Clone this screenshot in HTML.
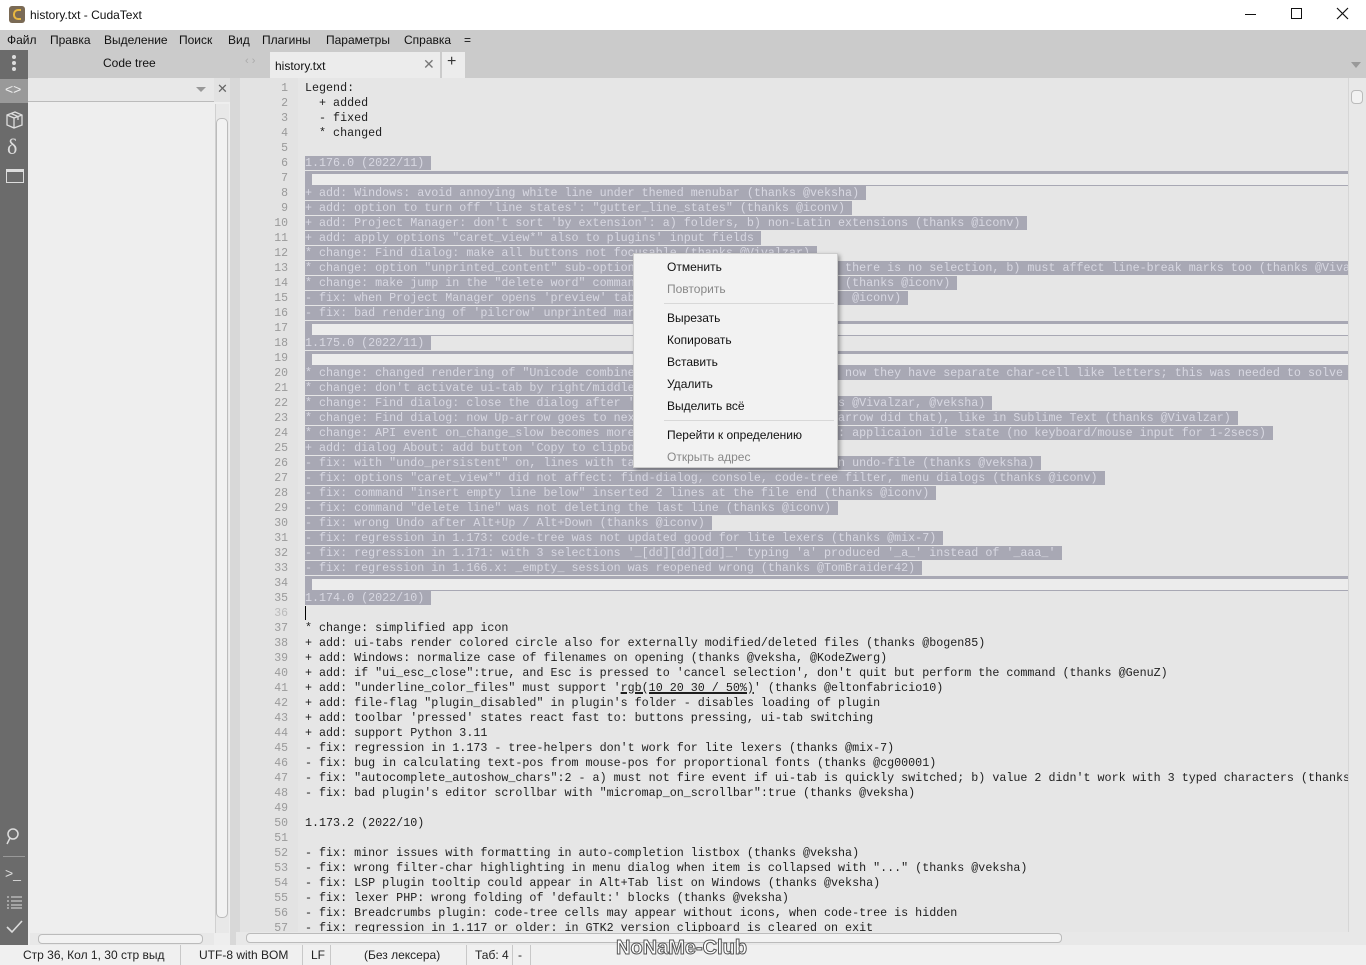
<!DOCTYPE html>
<html><head><meta charset="utf-8"><style>
*{margin:0;padding:0;box-sizing:border-box}
body{width:1366px;height:965px;position:relative;overflow:hidden;background:#e6e6e6;font-family:"Liberation Sans","Noto Sans CJK SC",sans-serif;font-size:12px;color:#111}
.a{position:absolute}
#title{left:0;top:0;width:1366px;height:30px;background:#fff}
#menu{left:0;top:30px;width:1366px;height:48px;background:#cbcbcb}
#menu span{position:absolute;top:3px;font-size:12px;color:#111}
#lt{left:0;top:50px;width:28px;height:895px;background:#6b6b6b}
#panel{left:28px;top:78px;width:202px;height:867px;background:#eeeeee}
#ed{left:240px;top:78px;width:1108px;height:854px;background:#e6e6e6;overflow:hidden}
#code{position:absolute;left:65px;top:3px;font-family:"Liberation Mono",monospace;font-size:11.7px;line-height:15px;white-space:pre;color:#1e1e1e}
#code div{height:15px}
.s{background:#a8a8b4;color:#d8d8e2}
#gut{position:absolute;left:0;top:3px;width:48px;text-align:right;font-family:"Liberation Mono",monospace;font-size:11.5px;line-height:15px;color:#9a9a9a}
.e{display:block;width:1043px;height:15px;background:#a8a8b4;position:relative}
.e i{position:absolute;left:7px;top:3px;right:0;height:11px;background:#ececec}
#ctx{left:633px;top:253px;width:205px;height:215px;background:#f2f2f2;border:1px solid #ccc;box-shadow:2px 2px 4px rgba(0,0,0,.35)}
#ctx div{position:absolute;left:33px;font-size:12px;color:#111}
#ctx .d{color:#888}
#ctx hr{position:absolute;left:30px;width:170px;border:0;border-top:1px solid #d8d8d8}
#status{left:0;top:945px;width:1366px;height:20px;background:#f0f0f0;font-size:12px}
#status span{position:absolute;top:3px;color:#222}
#status b{position:absolute;top:0;width:1px;height:20px;background:#c8c8c8}
</style></head><body>
<div id="title" class="a">
 <div class="a" style="left:9px;top:6px;width:16px;height:17px;background:#7a6a55;border-radius:3px"><div class="a" style="left:4px;top:3px;width:8px;height:11px;border:2px solid #e8b840;border-right:none;border-radius:5px 0 0 5px"></div></div>
 <span class="a" style="left:30px;top:8px;font-size:12px">history.txt - CudaText</span>
 <div class="a" style="left:1245px;top:14px;width:11px;height:1px;background:#111"></div>
 <div class="a" style="left:1291px;top:8px;width:11px;height:11px;border:1px solid #111"></div>
 <svg class="a" style="left:1336px;top:7px" width="13" height="13"><path d="M1 1L12 12M12 1L1 12" stroke="#111" stroke-width="1.2"/></svg>
</div>
<div id="menu" class="a">
 <span style="left:7px">Файл</span><span style="left:50px">Правка</span><span style="left:104px">Выделение</span><span style="left:179px">Поиск</span><span style="left:228px">Вид</span><span style="left:262px">Плагины</span><span style="left:326px">Параметры</span><span style="left:404px">Справка</span><span style="left:464px">=</span>
 <span style="left:103px;top:26px">Code tree</span>
 <span style="left:245px;top:25px;color:#aaa;font-size:11px">‹ ›</span>
 <div class="a" style="left:270px;top:22px;width:170px;height:26px;background:#ececec"></div>
 <span style="left:275px;top:29px">history.txt</span>
 <span style="left:423px;top:26px;color:#777;font-size:14px">✕</span>
 <div class="a" style="left:442px;top:22px;width:23px;height:26px;background:#ececec"></div>
 <span style="left:447px;top:23px;font-size:16px;color:#333">+</span>
 <div class="a" style="left:1351px;top:32px;border:5px solid transparent;border-top:6px solid #999"></div>
</div>
<div id="lt" class="a">
 <div class="a" style="left:12px;top:5px;width:4px;height:4px;border-radius:2px;background:#ddd;box-shadow:0 6px 0 #ddd,0 12px 0 #ddd"></div>
 <div class="a" style="left:0;top:29px;width:29px;height:24px;background:#999"></div>
 <span class="a" style="left:5px;top:31px;color:#eee;font-size:14px">&lt;&gt;</span>
 <svg class="a" style="left:5px;top:60px" width="19" height="19"><path d="M2 5L10 2L17 5L17 15L9 18L2 15ZM2 5L9 8L17 5M9 8L9 18M6 3.5L13 6.5L13 10" fill="none" stroke="#ddd" stroke-width="1.3"/></svg>
 <span class="a" style="left:7px;top:84px;color:#ddd;font-size:22px;font-family:'Liberation Serif',serif">δ</span>
 <div class="a" style="left:6px;top:119px;width:18px;height:14px;border:1.5px solid #ddd;border-top-width:3px"></div>
 <svg class="a" style="left:6px;top:778px" width="16" height="18"><circle cx="7" cy="6" r="5" fill="none" stroke="#ddd" stroke-width="1.5"/><path d="M4 10L1 16" stroke="#ddd" stroke-width="1.5"/></svg>
 <div class="a" style="left:3px;top:806px;width:22px;height:1px;background:#999"></div>
 <span class="a" style="left:5px;top:815px;color:#ddd;font-size:14px">&gt;_</span>
 <svg class="a" style="left:6px;top:845px" width="17" height="14"><path d="M1 2H3M5 2H16M1 6H3M5 6H16M1 10H3M5 10H16M1 13H3M5 13H16" stroke="#ddd"/></svg>
 <svg class="a" style="left:6px;top:870px" width="17" height="14"><path d="M1 7L6 12L16 1" fill="none" stroke="#ddd" stroke-width="1.6"/></svg>
</div>
<div id="panel" class="a">
 <div class="a" style="left:0;top:0;width:186px;height:24px;background:#e8e8e8;border-bottom:1px solid #bbb"></div>
 <div class="a" style="left:168px;top:9px;border:5px solid transparent;border-top:5px solid #999"></div>
 <div class="a" style="left:186px;top:0;width:16px;height:24px;background:#e2e2e2"></div>
 <span class="a" style="left:189px;top:3px;color:#666;font-size:13px">✕</span>
 <div class="a" style="left:187px;top:26px;width:14px;height:829px;background:#e8e8e8;border-left:1px solid #d0d0d0"></div>
 <div class="a" style="left:188px;top:40px;width:12px;height:800px;border:1px solid #bbb;border-radius:5px;background:#f2f2f2"></div>
 <div class="a" style="left:2px;top:855px;width:184px;height:12px;background:#e8e8e8"></div>
 <div class="a" style="left:10px;top:856px;width:165px;height:10px;border:1px solid #bbb;border-radius:4px;background:#f2f2f2"></div>
</div>
<div class="a" style="left:230px;top:78px;width:10px;height:867px;background:#d8d8d8"></div>
<div id="ed" class="a">
 <div class="a" style="left:0;top:0;width:58px;height:854px;background:#e3e3e3"></div>
 <div id="gut">1<br>2<br>3<br>4<br>5<br>6<br>7<br>8<br>9<br>10<br>11<br>12<br>13<br>14<br>15<br>16<br>17<br>18<br>19<br>20<br>21<br>22<br>23<br>24<br>25<br>26<br>27<br>28<br>29<br>30<br>31<br>32<br>33<br>34<br>35<br><span style="color:#bbb">36</span><br>37<br>38<br>39<br>40<br>41<br>42<br>43<br>44<br>45<br>46<br>47<br>48<br>49<br>50<br>51<br>52<br>53<br>54<br>55<br>56<br>57</div>
 <div id="code"><div>Legend:</div><div>  + added</div><div>  - fixed</div><div>  * changed</div><div></div><div><span class="s">1.176.0 (2022/11) </span></div><div><span class="e"><i></i></span></div><div><span class="s">+ add: Windows: avoid annoying white line under themed menubar (thanks @veksha) </span></div><div><span class="s">+ add: option to turn off 'line states': "gutter_line_states" (thanks @iconv) </span></div><div><span class="s">+ add: Project Manager: don't sort 'by extension': a) folders, b) non-Latin extensions (thanks @iconv) </span></div><div><span class="s">+ add: apply options "caret_view*" also to plugins' input fields </span></div><div><span class="s">* change: Find dialog: make all buttons not focusable (thanks @Vivalzar) </span></div><div><span class="s">* change: option "unprinted_content" sub-option                              there is no selection, b) must affect line-break marks too (thanks @Vivalzar) </span></div><div><span class="s">* change: make jump in the "delete word" comman                              (thanks @iconv) </span></div><div><span class="s">- fix: when Project Manager opens 'preview' tab                               @iconv) </span></div><div><span class="s">- fix: bad rendering of 'pilcrow' unprinted marks     </span></div><div><span class="e"><i></i></span></div><div><span class="s">1.175.0 (2022/11) </span></div><div><span class="e"><i></i></span></div><div><span class="s">* change: changed rendering of "Unicode combine                              now they have separate char-cell like letters; this was needed to solve some problems </span></div><div><span class="s">* change: don't activate ui-tab by right/middle click </span></div><div><span class="s">* change: Find dialog: close the dialog after '                             s @Vivalzar, @veksha) </span></div><div><span class="s">* change: Find dialog: now Up-arrow goes to nex                             arrow did that), like in Sublime Text (thanks @Vivalzar) </span></div><div><span class="s">* change: API event on_change_slow becomes more                             : applicaion idle state (no keyboard/mouse input for 1-2secs) </span></div><div><span class="s">+ add: dialog About: add button 'Copy to clipboard' </span></div><div><span class="s">- fix: with "undo_persistent" on, lines with ta                             n undo-file (thanks @veksha) </span></div><div><span class="s">- fix: options "caret_view*" did not affect: find-dialog, console, code-tree filter, menu dialogs (thanks @iconv) </span></div><div><span class="s">- fix: command "insert empty line below" inserted 2 lines at the file end (thanks @iconv) </span></div><div><span class="s">- fix: command "delete line" was not deleting the last line (thanks @iconv) </span></div><div><span class="s">- fix: wrong Undo after Alt+Up / Alt+Down (thanks @iconv) </span></div><div><span class="s">- fix: regression in 1.173: code-tree was not updated good for lite lexers (thanks @mix-7) </span></div><div><span class="s">- fix: regression in 1.171: with 3 selections '_[dd][dd][dd]_' typing 'a' produced '_a_' instead of '_aaa_' </span></div><div><span class="s">- fix: regression in 1.166.x: _empty_ session was reopened wrong (thanks @TomBraider42) </span></div><div><span class="e"><i></i></span></div><div><span class="s">1.174.0 (2022/10) </span></div><div><span style="border-left:1px solid #000"></span></div><div>* change: simplified app icon</div><div>+ add: ui-tabs render colored circle also for externally modified/deleted files (thanks @bogen85)</div><div>+ add: Windows: normalize case of filenames on opening (thanks @veksha, @KodeZwerg)</div><div>+ add: if "ui_esc_close":true, and Esc is pressed to 'cancel selection', don't quit but perform the command (thanks @GenuZ)</div><div>+ add: "underline_color_files" must support '<span style="text-decoration:underline;text-decoration-thickness:2px">rgb(10 20 30 / 50%)</span>' (thanks @eltonfabricio10)</div><div>+ add: file-flag "plugin_disabled" in plugin's folder - disables loading of plugin</div><div>+ add: toolbar 'pressed' states react fast to: buttons pressing, ui-tab switching</div><div>+ add: support Python 3.11</div><div>- fix: regression in 1.173 - tree-helpers don't work for lite lexers (thanks @mix-7)</div><div>- fix: bug in calculating text-pos from mouse-pos for proportional fonts (thanks @cg00001)</div><div>- fix: "autocomplete_autoshow_chars":2 - a) must not fire event if ui-tab is quickly switched; b) value 2 didn't work with 3 typed characters (thanks</div><div>- fix: bad plugin's editor scrollbar with "micromap_on_scrollbar":true (thanks @veksha)</div><div></div><div>1.173.2 (2022/10)</div><div></div><div>- fix: minor issues with formatting in auto-completion listbox (thanks @veksha)</div><div>- fix: wrong filter-char highlighting in menu dialog when item is collapsed with "..." (thanks @veksha)</div><div>- fix: LSP plugin tooltip could appear in Alt+Tab list on Windows (thanks @veksha)</div><div>- fix: lexer PHP: wrong folding of 'default:' blocks (thanks @veksha)</div><div>- fix: Breadcrumbs plugin: code-tree cells may appear without icons, when code-tree is hidden</div><div>- fix: regression in 1.117 or older: in GTK2 version clipboard is cleared on exit</div></div>
</div>
<div class="a" style="left:1348px;top:78px;width:18px;height:854px;background:#e8e8e8;border-left:1px solid #d6d6d6"></div>
<div class="a" style="left:1351px;top:90px;width:12px;height:14px;border:1px solid #bbb;border-radius:4px;background:#f2f2f2"></div>
<div class="a" style="left:236px;top:932px;width:1130px;height:13px;background:#e8e8e8"></div>
<div class="a" style="left:246px;top:933px;width:816px;height:10px;border:1px solid #bbb;border-radius:4px;background:#f2f2f2"></div>
<div id="ctx" class="a">
 <div style="top:6px">Отменить</div>
 <div class="d" style="top:28px">Повторить</div>
 <hr style="top:49px">
 <div style="top:57px">Вырезать</div>
 <div style="top:79px">Копировать</div>
 <div style="top:101px">Вставить</div>
 <div style="top:123px">Удалить</div>
 <div style="top:145px">Выделить всё</div>
 <hr style="top:166px">
 <div style="top:174px">Перейти к определению</div>
 <div class="d" style="top:196px">Открыть адрес</div>
</div>
<div id="status" class="a">
 <span style="left:23px">Стр 36, Кол 1, 30 стр выд</span><b style="left:180px"></b>
 <span style="left:199px">UTF-8 with BOM</span><b style="left:302px"></b>
 <span style="left:311px">LF</span><b style="left:330px"></b>
 <span style="left:364px">(Без лексера)</span><b style="left:466px"></b>
 <span style="left:475px">Таб: 4</span><b style="left:512px"></b>
 <span style="left:518px">-</span><b style="left:530px"></b>
 <span style="left:616px;top:-8px;font-size:20px;font-weight:bold;color:#fff;-webkit-text-stroke:1px #555;letter-spacing:0px">NoNaMe-Club</span>
</div>
</body></html>
